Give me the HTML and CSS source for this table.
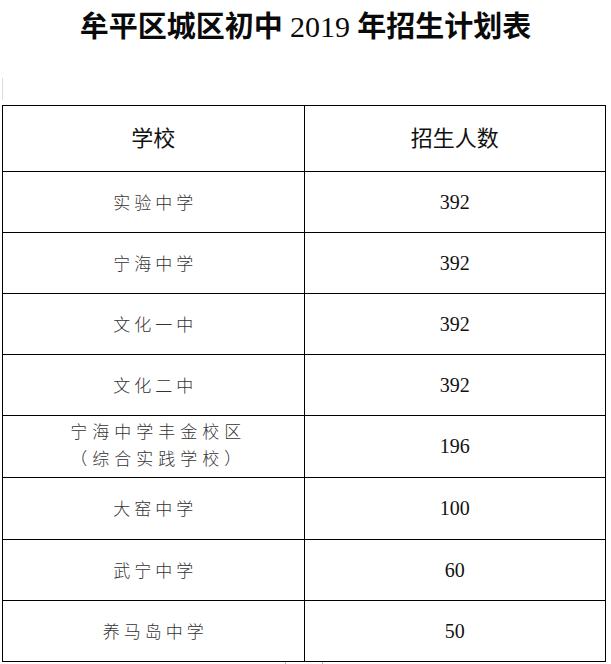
FILE: index.html
```html
<!DOCTYPE html>
<html lang="zh-CN">
<head>
<meta charset="utf-8">
<title>牟平区城区初中 2019 年招生计划表</title>
<link rel="stylesheet" href="styles.css">
</head>
<body>
<div class="page">
  <h1 class="title">牟平区城区初中 <span class="year">2019</span> 年招生计划表</h1>
  <div class="mark"></div>
  <table class="plan">
    <tr class="head">
      <th>学校</th>
      <th>招生人数</th>
    </tr>
    <tr class="r61"><td class="name">实验中学</td><td class="num">392</td></tr>
    <tr class="r61"><td class="name">宁海中学</td><td class="num">392</td></tr>
    <tr class="r61"><td class="name">文化一中</td><td class="num">392</td></tr>
    <tr class="r61"><td class="name">文化二中</td><td class="num">392</td></tr>
    <tr class="r62"><td class="name two">宁海中学丰金校区<br>（综合实践学校）</td><td class="num">196</td></tr>
    <tr class="r62"><td class="name">大窑中学</td><td class="num">100</td></tr>
    <tr class="r61"><td class="name">武宁中学</td><td class="num">60</td></tr>
    <tr class="r61"><td class="name">养马岛中学</td><td class="num">50</td></tr>
  </table>
  <div class="ticks"><span class="tick"></span><span class="tick"></span></div>
</div>
</body>
</html>
```
FILE: styles.css
```css
html, body {
  margin: 0;
  padding: 0;
  background: #ffffff;
}
.page {
  width: 611px;
  height: 664px;
  overflow: hidden;
}
.title {
  margin: 0;
  height: 52px;
  line-height: 54px;
  text-align: center;
  font-family: "Liberation Serif", "Noto Sans CJK SC", serif;
  font-weight: 700;
  font-size: 29px;
  color: #0a0a0a;
}
.year {
  font-weight: 400;
  font-size: 30px;
}
.mark {
  margin: 26px 0 5px 2px;
  width: 1px;
  height: 22px;
  background: #dcdcdc;
}
.plan {
  margin-left: 2px;
  width: 604px;
  border-collapse: collapse;
  table-layout: fixed;
}
.plan th,
.plan td {
  border: 1px solid #000;
  padding: 0;
  text-align: center;
  vertical-align: middle;
  width: 50%;
}
.head { height: 66px; }
.r61 { height: 61px; }
.r62 { height: 62px; }
.plan th {
  font-family: "Noto Sans CJK SC", sans-serif;
  font-weight: 400;
  font-size: 22px;
  color: #111;
  padding-bottom: 6px;
}
.name {
  font-family: "Noto Sans CJK SC", sans-serif;
  font-weight: 300;
  font-size: 17px;
  letter-spacing: 4px;
  padding-left: 4px !important;
  padding-bottom: 2px !important;
  color: #333;
}
.name.two {
  letter-spacing: 5px;
  line-height: 27px;
  padding-left: 10px !important;
  padding-bottom: 5px !important;
}
.num {
  font-family: "Liberation Serif", serif;
  font-size: 20px;
  color: #111;
}
.ticks {
  display: flex;
  gap: 36px;
  padding-left: 285px;
}
.tick {
  width: 1px;
  height: 4px;
  background: #bbb;
}
```
